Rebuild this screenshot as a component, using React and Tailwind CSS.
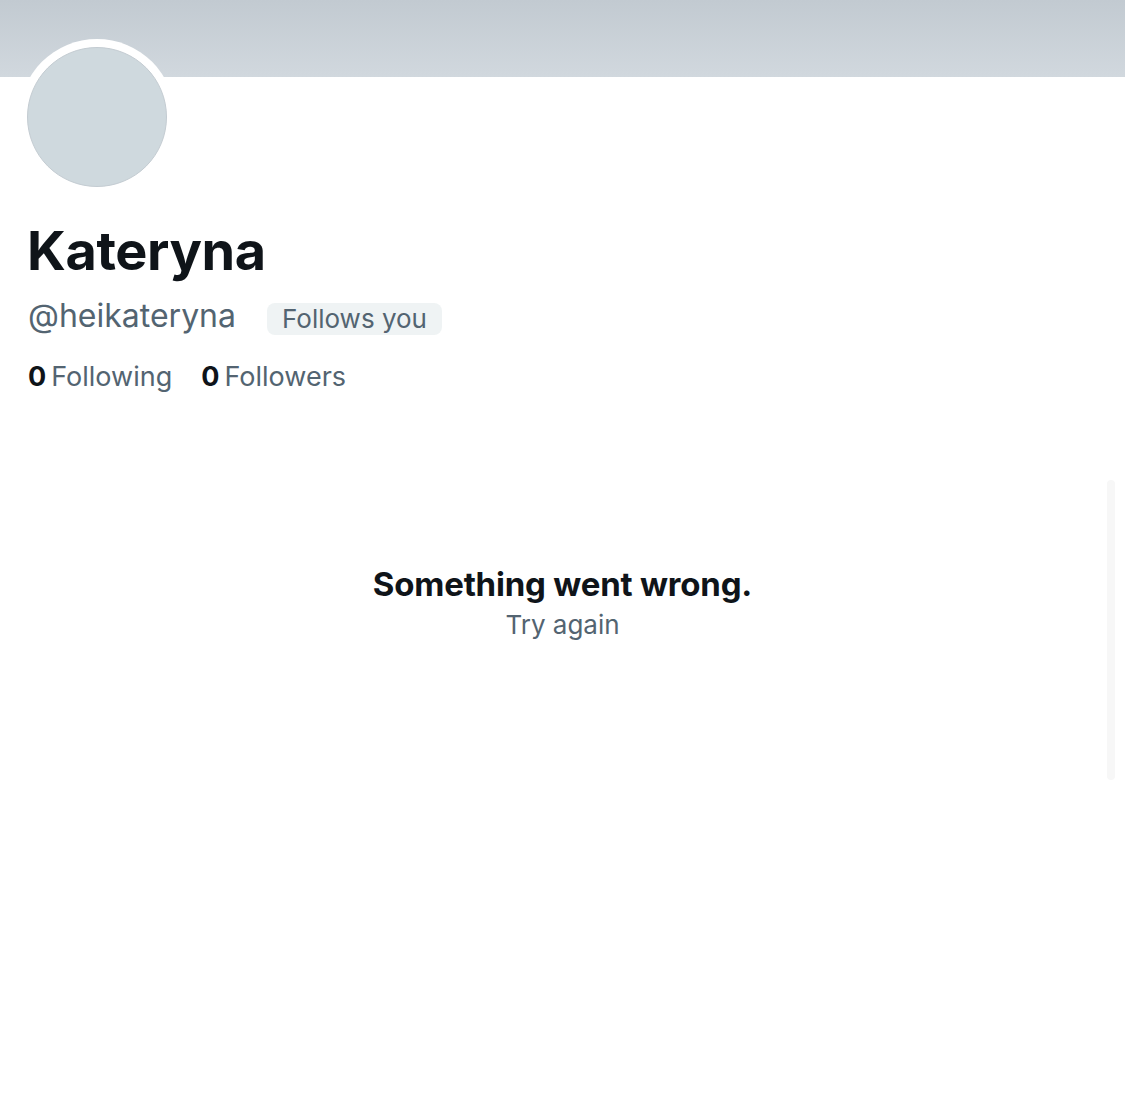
export default function App() {
  return (
    <div className="w-[1125px] h-[1120px] bg-white relative overflow-hidden" style={{ fontFamily: "Inter, 'Noto Sans', sans-serif" }}>
      <div className="h-[77px] w-full bg-gradient-to-b from-[#c2cad1] to-[#d1d8de]" />
      <div className="px-[28px]">
        <div className="-mt-[38px] ml-[-9px] w-[156px] h-[156px] rounded-full bg-white p-[8px]">
          <div className="w-full h-full rounded-full bg-[#cfd9de] border border-[#c4ccd2]" />
        </div>
        <div className="mt-[24px] ml-[-1px] text-[54px] leading-[64px] font-bold text-[#0f1419] tracking-[-0.4px]">Kateryna</div>
        <div className="mt-[13px] flex items-center">
          <span className="text-[32px] leading-[40px] text-[#536471]">@heikateryna</span>
          <span className="ml-[31px] mt-[5px] rounded-[8px] bg-[#eff3f4] px-[15px] text-[26px] leading-[32px] text-[#536471]">Follows you</span>
        </div>
        <div className="mt-[23px] flex items-center text-[27px] leading-[36px]">
          <span className="font-bold text-[#0f1419]">0</span>
          <span className="ml-[5px] text-[#536471]">Following</span>
          <span className="ml-[29px] font-bold text-[#0f1419]">0</span>
          <span className="ml-[5px] text-[#536471]">Followers</span>
        </div>
      </div>
      <div className="mt-[167px] flex flex-col items-center">
        <div className="text-[33px] leading-[44px] font-bold text-[#0f1419] tracking-[-0.2px]">Something went wrong.</div>
        <div className="mt-[1px] text-[26px] leading-[36px] text-[#536471]">Try again</div>
      </div>
      <div className="absolute left-[1107px] top-[480px] w-[8px] h-[300px] rounded-full bg-[#f7f7f7]" />
    </div>
  );
}
